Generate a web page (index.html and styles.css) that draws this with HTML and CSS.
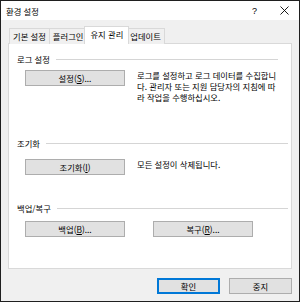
FILE: index.html
```html
<!DOCTYPE html>
<html lang="ko">
<head>
    <meta charset="UTF-8">
    <title>환경 설정</title>
    <link rel="stylesheet" href="styles.css">
</head>
<body>
    <div class="window">
        <div class="titlebar">
            <span class="title">환경 설정</span>
            <span class="help">?</span>
            <svg class="close" width="9" height="9" viewBox="0 0 9 9">
                <path d="M0.5 0.5 L8.5 8.5 M8.5 0.5 L0.5 8.5" stroke="#000" stroke-width="0.9" fill="none"/>
            </svg>
        </div>

        <div class="content">
            <ul class="tabs">
                <li class="tab">기본 설정</li>
                <li class="tab">플러그인</li>
                <li class="tab active">유지 관리</li>
                <li class="tab">업데이트</li>
            </ul>

            <div class="panel">
                <!-- 로그 -->
                <section class="group log">
                    <div class="group-head"><span>로그 설정</span></div>
                    <div class="group-body">
                        <button class="btn">설정(<u>S</u>)...</button>
                        <p class="desc">로그를 설정하고 로그 데이터를 수집합니<br>다. 관리자 또는 지원 담당자의 지침에 따<br>라 작업을 수행하십시오.</p>
                    </div>
                </section>

                <!-- 초기화 -->
                <section class="group reset">
                    <div class="group-head"><span>조기화</span></div>
                    <div class="group-body">
                        <button class="btn">조기화(<u>I</u>)</button>
                        <p class="desc">모든 설정이 삭제됩니다.</p>
                    </div>
                </section>

                <!-- 백업 -->
                <section class="group backup">
                    <div class="group-head"><span>백업/복구</span></div>
                    <div class="group-body">
                        <button class="btn">백업(<u>B</u>)...</button>
                        <button class="btn">복구(<u>R</u>)...</button>
                    </div>
                </section>
            </div>

            <div class="footer">
                <button class="btn small default">확인</button>
                <button class="btn small">중지</button>
            </div>
        </div>
    </div>
</body>
</html>
```

FILE: styles.css
```css
body {
    margin: 0;
    background: #fff;
    font-family: "Noto Sans CJK KR", "Noto Sans", sans-serif;
    font-size: 8.3px;
    color: #000;
}

.window {
    width: 300px;
    height: 302px;
    box-sizing: border-box;
    border: 1px solid #1f1f1f;
    background: #f0f0f0;
    display: flex;
    flex-direction: column;
}

.titlebar {
    height: 19px;
    background: #fff;
    display: flex;
    align-items: center;
    padding: 0 10px 0 5px;
}

.title {
    flex: 1;
}

.help {
    margin-right: 23px;
    font-family: "Liberation Sans", sans-serif;
    font-size: 9px;
}

.content {
    padding: 6px 7px 0;
}

.tabs {
    list-style: none;
    margin: 0 0 -1px;
    padding: 0 0 0 1px;
    display: flex;
    align-items: flex-end;
    height: 18px;
}

.tab {
    height: 15px;
    line-height: 15px;
    padding: 0 3px;
    border: 1px solid #d9d9d9;
    border-bottom: none;
    background: #f0f0f0;
}

.tab + .tab {
    border-left: none;
}

.tab.active {
    height: 17px;
    line-height: 15px;
    margin: 0 -2px 0 -3px;
    padding: 0 5px;
    border-left: 1px solid #d9d9d9;
    background: #fff;
    position: relative;
}

.tab.active + .tab {
    border-left: none;
}

.panel {
    height: 226px;
    box-sizing: border-box;
    background: #fff;
    border: 1px solid #d9d9d9;
    padding: 9px 3px 0 8px;
}

.group-head {
    display: flex;
    align-items: center;
    gap: 6px;
    height: 12px;
}

.group-head::after {
    content: "";
    flex: 1;
    height: 1px;
    background: #d5d5d5;
}

.log .group-head {
    margin-right: 10px;
}

.group-body {
    display: flex;
    align-items: flex-start;
    gap: 12px;
    padding-left: 8px;
}

.log .group-body {
    margin-top: 5px;
}

.reset {
    margin-top: 34px;
}

.reset .group-body {
    margin-top: 10px;
}

.backup {
    margin-top: 27px;
}

.backup .group-body {
    margin-top: 7px;
    gap: 28px;
}

.desc {
    margin: 0;
    line-height: 11px;
}

.btn {
    width: 100px;
    height: 16px;
    padding: 0;
    font-family: inherit;
    font-size: inherit;
    color: #000;
    background: #e1e1e1;
    border: 1px solid #adadad;
    flex: none;
}

.footer {
    display: flex;
    justify-content: flex-end;
    gap: 9px;
    margin-top: 9px;
}

.btn.small {
    width: 63px;
}

.btn.default {
    border-color: #0078d7;
    box-shadow: inset 0 0 0 1px #0078d7;
}
```
